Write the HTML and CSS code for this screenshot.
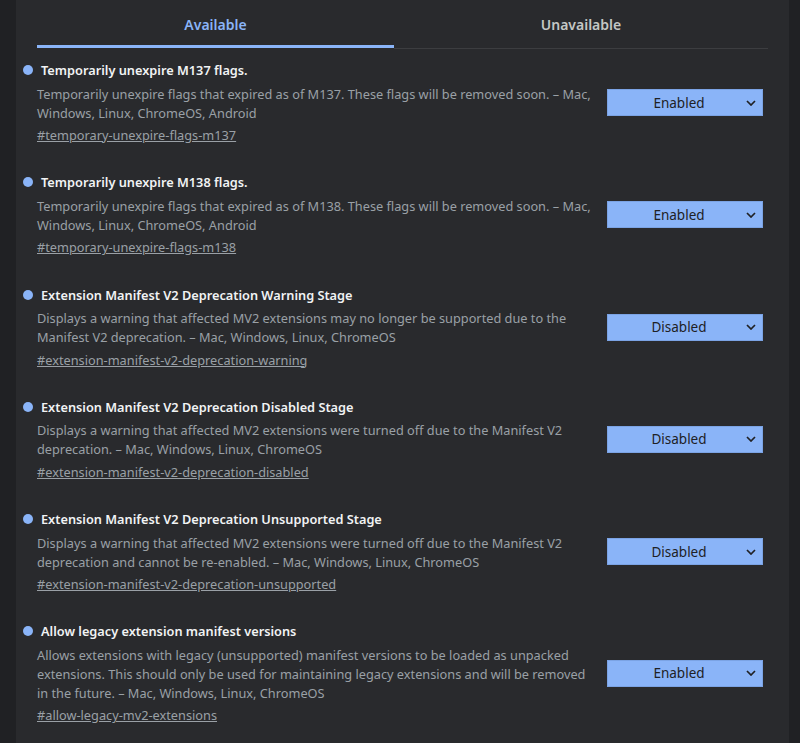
FILE: index.html
```html
<!DOCTYPE html>
<html lang="en">
<head>
<meta charset="utf-8">
<title>Experiments</title>
<link rel="stylesheet" href="styles.css">
</head>
<body>
<div class="page">
  <main class="panel">
    <div class="tabs">
      <div class="tab tab-active">Available</div>
      <div class="tab">Unavailable</div>
    </div>
    <div class="flags">
      <section class="flag">
        <div class="flag-text">
          <h3 class="flag-title"><span class="dot"></span>Temporarily unexpire M137 flags.</h3>
          <p class="flag-desc">Temporarily unexpire flags that expired as of M137. These flags will be removed soon. – Mac, Windows, Linux, ChromeOS, Android</p>
          <a class="flag-link" href="#temporary-unexpire-flags-m137">#temporary-unexpire-flags-m137</a>
        </div>
        <div class="select"><span class="select-label">Enabled</span><svg class="chev" viewBox="0 0 10 6" width="10" height="6"><path d="M1 1l4 4 4-4" fill="none" stroke="#202124" stroke-width="1.7"/></svg></div>
      </section>
      <section class="flag">
        <div class="flag-text">
          <h3 class="flag-title"><span class="dot"></span>Temporarily unexpire M138 flags.</h3>
          <p class="flag-desc">Temporarily unexpire flags that expired as of M138. These flags will be removed soon. – Mac, Windows, Linux, ChromeOS, Android</p>
          <a class="flag-link" href="#temporary-unexpire-flags-m138">#temporary-unexpire-flags-m138</a>
        </div>
        <div class="select"><span class="select-label">Enabled</span><svg class="chev" viewBox="0 0 10 6" width="10" height="6"><path d="M1 1l4 4 4-4" fill="none" stroke="#202124" stroke-width="1.7"/></svg></div>
      </section>
      <section class="flag">
        <div class="flag-text">
          <h3 class="flag-title"><span class="dot"></span>Extension Manifest V2 Deprecation Warning Stage</h3>
          <p class="flag-desc">Displays a warning that affected MV2 extensions may no longer be supported due to the Manifest V2 deprecation. – Mac, Windows, Linux, ChromeOS</p>
          <a class="flag-link" href="#extension-manifest-v2-deprecation-warning">#extension-manifest-v2-deprecation-warning</a>
        </div>
        <div class="select"><span class="select-label">Disabled</span><svg class="chev" viewBox="0 0 10 6" width="10" height="6"><path d="M1 1l4 4 4-4" fill="none" stroke="#202124" stroke-width="1.7"/></svg></div>
      </section>
      <section class="flag">
        <div class="flag-text">
          <h3 class="flag-title"><span class="dot"></span>Extension Manifest V2 Deprecation Disabled Stage</h3>
          <p class="flag-desc">Displays a warning that affected MV2 extensions were turned off due to the Manifest V2 deprecation. – Mac, Windows, Linux, ChromeOS</p>
          <a class="flag-link" href="#extension-manifest-v2-deprecation-disabled">#extension-manifest-v2-deprecation-disabled</a>
        </div>
        <div class="select"><span class="select-label">Disabled</span><svg class="chev" viewBox="0 0 10 6" width="10" height="6"><path d="M1 1l4 4 4-4" fill="none" stroke="#202124" stroke-width="1.7"/></svg></div>
      </section>
      <section class="flag">
        <div class="flag-text">
          <h3 class="flag-title"><span class="dot"></span>Extension Manifest V2 Deprecation Unsupported Stage</h3>
          <p class="flag-desc">Displays a warning that affected MV2 extensions were turned off due to the Manifest V2 deprecation and cannot be re-enabled. – Mac, Windows, Linux, ChromeOS</p>
          <a class="flag-link" href="#extension-manifest-v2-deprecation-unsupported">#extension-manifest-v2-deprecation-unsupported</a>
        </div>
        <div class="select"><span class="select-label">Disabled</span><svg class="chev" viewBox="0 0 10 6" width="10" height="6"><path d="M1 1l4 4 4-4" fill="none" stroke="#202124" stroke-width="1.7"/></svg></div>
      </section>
      <section class="flag">
        <div class="flag-text">
          <h3 class="flag-title"><span class="dot"></span>Allow legacy extension manifest versions</h3>
          <p class="flag-desc">Allows extensions with legacy (unsupported) manifest versions to be loaded as unpacked extensions. This should only be used for maintaining legacy extensions and will be removed in the future. – Mac, Windows, Linux, ChromeOS</p>
          <a class="flag-link" href="#allow-legacy-mv2-extensions">#allow-legacy-mv2-extensions</a>
        </div>
        <div class="select"><span class="select-label">Enabled</span><svg class="chev" viewBox="0 0 10 6" width="10" height="6"><path d="M1 1l4 4 4-4" fill="none" stroke="#202124" stroke-width="1.7"/></svg></div>
      </section>
    </div>
  </main>
</div>
</body>
</html>
```
FILE: styles.css
```css
html, body {
  margin: 0;
  padding: 0;
  background: #202124;
  height: 100%;
  overflow: hidden;
}
body {
  font-family: "Noto Sans", "Open Sans", sans-serif;
  font-size: 12.75px;
  color: #9aa0a6;
}
.page {
  display: flex;
  padding: 0 11px 0 16px;
  min-height: 100%;
  box-sizing: border-box;
}
.panel {
  flex: 1;
  background: #292a2d;
  padding: 0 21px;
  min-height: 743px;
}
.tabs {
  display: grid;
  grid-template-columns: 357px 1fr;
  height: 49px;
}
.tab {
  display: flex;
  align-items: center;
  justify-content: center;
  font-size: 14px;
  font-weight: 600;
  color: #c4c7c5;
  border-bottom: 1px solid #3c3d40;
  box-sizing: border-box;
}
.tab-active {
  color: #8ab4f8;
  border-bottom: 3px solid #8ab4f8;
  height: 48px;
  padding-top: 3px;
}
.flags {
  padding-top: 11px;
}
.flag {
  display: flex;
  align-items: center;
  padding-bottom: 27.3px;
}
.flag-text {
  flex: 1;
  min-width: 0;
  padding-right: 10px;
}
.flag-title {
  display: flex;
  align-items: center;
  gap: 8px;
  margin: 0 0 0 -14px;
  font-size: 12.75px;
  font-weight: 600;
  line-height: 20px;
  color: #f1f3f4;
}
.dot {
  width: 10px;
  height: 10px;
  border-radius: 50%;
  background: #8ab4f8;
  flex: none;
}
.flag-desc {
  margin: 4.5px 0 0;
  line-height: 19px;
}
.flag-link {
  display: inline-block;
  margin-top: 2.5px;
  line-height: 20px;
  color: #9aa0a6;
  text-decoration: underline;
}
.select {
  flex: none;
  width: 156px;
  height: 27px;
  margin-right: 5px;
  box-sizing: border-box;
  background: #8ab4f8;
  border: 1px solid #7ba3e4;
  display: flex;
  align-items: center;
  color: #202124;
  font-size: 13.5px;
  padding: 0 6px 0 8px;
}
.select-label {
  flex: 1;
  text-align: center;
  margin-right: 4px;
}
.chev {
  flex: none;
}
```
